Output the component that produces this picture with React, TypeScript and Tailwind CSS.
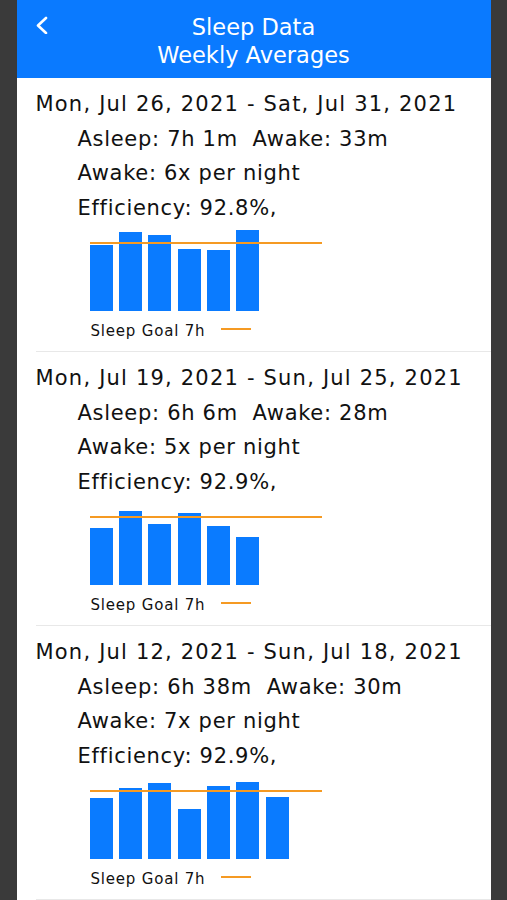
import React from "react";

type Week = {
  range: string;
  asleep: string;
  awake: string;
  times: string;
  eff: string;
  bars: number[];
};

const weeks: Week[] = [
  {
    range: "Mon, Jul 26, 2021 - Sat, Jul 31, 2021",
    asleep: "7h 1m",
    awake: "33m",
    times: "6x",
    eff: "92.8%",
    bars: [66, 79, 76, 62, 61, 81],
  },
  {
    range: "Mon, Jul 19, 2021 - Sun, Jul 25, 2021",
    asleep: "6h 6m",
    awake: "28m",
    times: "5x",
    eff: "92.9%",
    bars: [57, 74, 61, 72, 59, 48],
  },
  {
    range: "Mon, Jul 12, 2021 - Sun, Jul 18, 2021",
    asleep: "6h 38m",
    awake: "30m",
    times: "7x",
    eff: "92.9%",
    bars: [61, 71, 76, 50, 73, 77, 62],
  },
];

function Section({ w }: { w: Week }) {
  return (
    <div className="flex flex-col">
      <div className="pt-[9px] pl-[19px] text-[21px] text-[#111]">
        <div className="h-[34.5px] leading-[34.5px] whitespace-pre tracking-[1.2px]">{w.range}</div>
        <div className="pl-[42px] tracking-[0.7px]">
          <div className="h-[34.5px] leading-[34.5px] whitespace-pre">
            {`Asleep: ${w.asleep}  Awake: ${w.awake}`}
          </div>
          <div className="h-[34.5px] leading-[34.5px] whitespace-pre">
            {`Awake: ${w.times} per night`}
          </div>
          <div className="h-[34.5px] leading-[34.5px] whitespace-pre">
            {`Efficiency: ${w.eff},`}
          </div>
        </div>
      </div>
      <div className="relative ml-[73px] mt-[-1px] h-[87px] w-[232px] flex items-end gap-[6.4px]">
        {w.bars.map((h, i) => (
          <div
            key={i}
            className="w-[23px] bg-[#0a7bff]"
            style={{ height: `${h}px` }}
          />
        ))}
        <div className="absolute left-0 top-[17.7px] h-[2px] w-[232px] bg-[#f59a23]" />
      </div>
      <div className="mt-[8px] ml-[74px] flex items-center h-[24px] text-[15px] leading-[24px] tracking-[0.8px] text-[#111]">
        <span>Sleep Goal 7h</span>
        <span className="ml-[16px] mt-[-4px] h-[2.5px] w-[30px] bg-[#f59a23]" />
      </div>
      <div className="mt-[8px] ml-[19px] h-[1px] bg-[#e8e8e8]" />
    </div>
  );
}

export default function App() {
  return (
    <div
      className="w-[507px] h-[900px] overflow-hidden bg-[#3a3a3a] flex justify-center"
      style={{ fontFamily: '"DejaVu Sans", sans-serif' }}
    >
      <div className="w-[474px] h-full bg-white flex flex-col">
        <div className="relative h-[78px] bg-[#0a7aff] pt-[13px] flex flex-col items-center text-white text-[22.5px] leading-[28px]">
          <div>Sleep Data</div>
          <div>Weekly Averages</div>
          <svg
            className="absolute left-[18px] top-[16px]"
            width="14"
            height="18"
            viewBox="0 0 14 18"
            fill="none"
          >
            <polyline
              points="11,2 3,9.5 11,17"
              stroke="white"
              strokeWidth="2.6"
              strokeLinecap="round"
              strokeLinejoin="round"
            />
          </svg>
        </div>
        {weeks.map((w, i) => (
          <Section key={i} w={w} />
        ))}
      </div>
    </div>
  );
}
